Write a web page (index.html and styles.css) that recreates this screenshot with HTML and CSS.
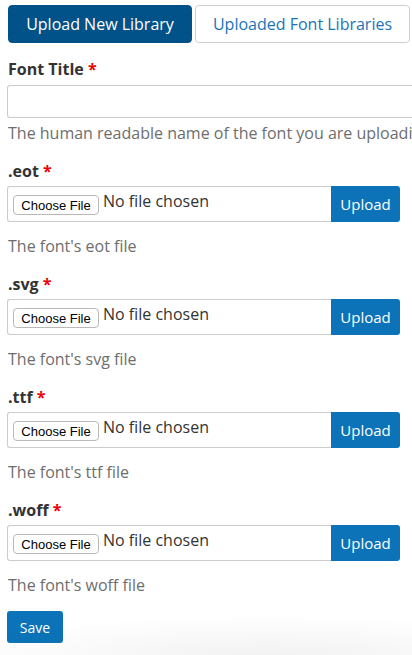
FILE: index.html
```html
<!DOCTYPE html>
<html>
<head>
<meta charset="utf-8">
<link rel="stylesheet" href="styles.css">
</head>
<body>
<div class="page">
  <div class="tabs">
    <button class="tab tab-active">Upload New Library</button>
    <button class="tab">Uploaded Font Libraries</button>
  </div>

  <div class="field field-first">
    <div class="label">Font Title <span class="req">*</span></div>
    <div class="text-input"></div>
    <div class="help">The human readable name of the font you are uploading</div>
  </div>

  <div class="field">
    <div class="label">.eot <span class="req">*</span></div>
    <div class="file-row">
      <div class="file-box"><span class="choose">Choose File</span><span class="nofile">No file chosen</span></div>
      <div class="upload">Upload</div>
    </div>
    <div class="help help-file">The font's eot file</div>
  </div>

  <div class="field">
    <div class="label">.svg <span class="req">*</span></div>
    <div class="file-row">
      <div class="file-box"><span class="choose">Choose File</span><span class="nofile">No file chosen</span></div>
      <div class="upload">Upload</div>
    </div>
    <div class="help help-file">The font's svg file</div>
  </div>

  <div class="field">
    <div class="label">.ttf <span class="req">*</span></div>
    <div class="file-row">
      <div class="file-box"><span class="choose">Choose File</span><span class="nofile">No file chosen</span></div>
      <div class="upload">Upload</div>
    </div>
    <div class="help help-file">The font's ttf file</div>
  </div>

  <div class="field">
    <div class="label">.woff <span class="req">*</span></div>
    <div class="file-row">
      <div class="file-box"><span class="choose">Choose File</span><span class="nofile">No file chosen</span></div>
      <div class="upload">Upload</div>
    </div>
    <div class="help help-file">The font's woff file</div>
  </div>

  <button class="save">Save</button>
</div>
<div class="shade"></div>
</body>
</html>
```

FILE: styles.css
```css
html, body {
  margin: 0;
  padding: 0;
  background: #fff;
  overflow: hidden;
}
body {
  font-family: "Open Sans", "Noto Sans", sans-serif;
  color: #333;
  width: 412px;
  height: 655px;
  position: relative;
}
.page {
  padding: 5px 0 0 7px;
}
.tabs {
  display: flex;
  gap: 3px;
  padding-left: 1px;
}
.tab {
  height: 38px;
  border-radius: 4px;
  border: 1px solid #cfcfcf;
  background: #fff;
  color: #1a74b8;
  font-family: "Open Sans", sans-serif;
  font-size: 16px;
  padding: 0;
  width: 215px;
}
.tab-active {
  width: 184px;
  background: #005289;
  border-color: #005289;
  color: #fff;
}
.field {
  margin-top: 18px;
}
.field-first {
  margin-top: 16px;
}
.label {
  font-weight: 700;
  font-size: 16px;
  line-height: 20px;
  padding-left: 1px;
  color: #333;
}
.req {
  color: #e00;
}
.text-input {
  margin-top: 6px;
  height: 31px;
  width: 405px;
  box-sizing: content-box;
  border: 1px solid #ccc;
  border-right: none;
  border-radius: 3px 0 0 3px;
}
.help {
  margin-top: 5px;
  font-size: 16px;
  line-height: 20px;
  color: #6e6e6e;
  white-space: nowrap;
  padding-left: 1px;
  width: 404px;
  overflow: hidden;
}
.help-file {
  margin-top: 14px;
}
.file-row {
  margin-top: 5px;
  display: flex;
  width: 393px;
  height: 36px;
}
.file-box {
  flex: 1;
  border: 1px solid #ccc;
  border-right: none;
  border-radius: 3px 0 0 3px;
  display: flex;
  align-items: flex-start;
  padding: 7px 0 0 5px;
  box-sizing: border-box;
}
.choose {
  font-family: "Liberation Sans", Arial, sans-serif;
  font-size: 13px;
  color: #000;
  height: 20px;
  width: 86px;
  box-sizing: border-box;
  border: 1px solid #b9b9b9;
  border-radius: 4px;
  background: #fff;
  display: flex;
  align-items: center;
  justify-content: center;
  margin-top: 1px;
}
.nofile {
  font-size: 16px;
  line-height: 20px;
  margin-left: 4px;
  margin-top: -3px;
  color: #333;
}
.upload {
  width: 69px;
  background: #0c73b8;
  color: #fff;
  border-radius: 0 3px 3px 0;
  font-size: 15px;
  display: flex;
  align-items: center;
  justify-content: center;
}
.save {
  margin-top: 16px;
  height: 32px;
  width: 56px;
  background: #0c73b8;
  border: none;
  border-radius: 3px;
  color: #fff;
  font-family: "Open Sans", sans-serif;
  font-size: 14px;
  padding: 0;
}
.shade {
  position: absolute;
  left: 0;
  right: 0;
  bottom: 0;
  height: 40px;
  background: radial-gradient(ellipse 80% 100% at 65% 100%, rgba(0,0,0,0.05), rgba(0,0,0,0) 100%);
  pointer-events: none;
}
```
